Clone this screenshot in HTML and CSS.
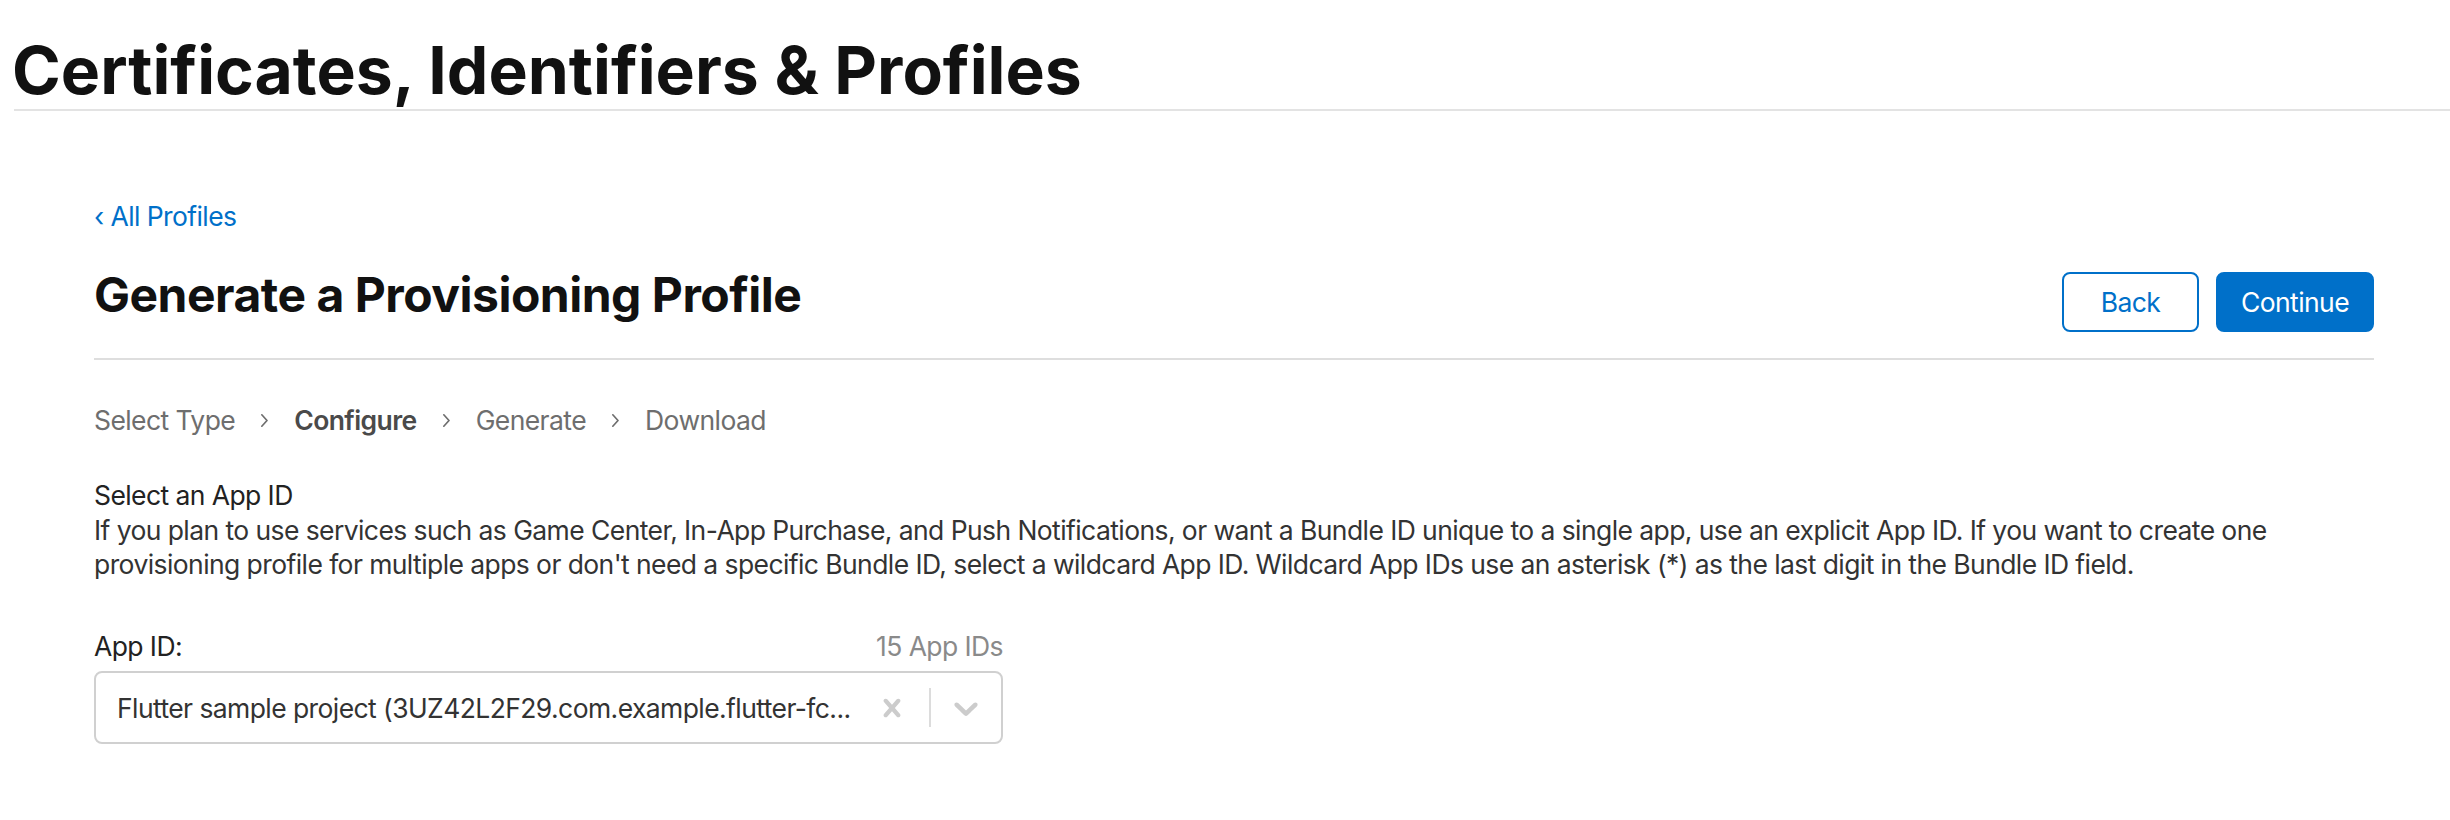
FILE: index.html
```html
<!DOCTYPE html>
<html lang="en">
<head>
<meta charset="utf-8">
<title>Certificates, Identifiers &amp; Profiles</title>
<link rel="stylesheet" href="styles.css">
</head>
<body>
<header class="topbar">
  <h1 class="site-title">Certificates, Identifiers &amp; Profiles</h1>
</header>
<main class="main">
  <a class="back-link" href="#">&lsaquo; All Profiles</a>
  <div class="title-row">
    <h2 class="page-title">Generate a Provisioning Profile</h2>
    <div class="actions">
      <button class="btn btn-outline">Back</button>
      <button class="btn btn-primary">Continue</button>
    </div>
  </div>
  <nav class="steps">
    <span class="step">Select Type</span>
    <svg class="chev" viewBox="0 0 9 15" width="9" height="15"><path d="M1.8 1.8 L7 7.5 L1.8 13.2" fill="none" stroke="#6e6e6e" stroke-width="1.7" stroke-linecap="round" stroke-linejoin="round"/></svg>
    <span class="step step-active">Configure</span>
    <svg class="chev" viewBox="0 0 9 15" width="9" height="15"><path d="M1.8 1.8 L7 7.5 L1.8 13.2" fill="none" stroke="#6e6e6e" stroke-width="1.7" stroke-linecap="round" stroke-linejoin="round"/></svg>
    <span class="step">Generate</span>
    <svg class="chev" viewBox="0 0 9 15" width="9" height="15"><path d="M1.8 1.8 L7 7.5 L1.8 13.2" fill="none" stroke="#6e6e6e" stroke-width="1.7" stroke-linecap="round" stroke-linejoin="round"/></svg>
    <span class="step">Download</span>
  </nav>
  <section class="intro">
    <div class="intro-title">Select an App ID</div>
    <p class="intro-text">If you plan to use services such as Game Center, In-App Purchase, and Push Notifications, or want a Bundle ID unique to a single app, use an explicit App ID. If you want to create one provisioning profile for multiple apps or don't need a specific Bundle ID, select a wildcard App ID. Wildcard App IDs use an asterisk (*) as the last digit in the Bundle ID field.</p>
  </section>
  <div class="field">
    <div class="field-head">
      <label class="field-label">App ID:</label>
      <span class="field-count">15 App IDs</span>
    </div>
    <div class="select">
      <div class="select-value">Flutter sample project (3UZ42L2F29.com.example.flutter-fc...</div>
      <div class="select-indicators">
        <div class="ind ind-clear">
          <svg viewBox="0 0 20 20" width="36" height="36"><path fill="#cccccc" d="M14.348 14.849c-0.469 0.469-1.229 0.469-1.697 0l-2.651-3.030-2.651 3.029c-0.469 0.469-1.229 0.469-1.697 0-0.469-0.469-0.469-1.229 0-1.697l2.758-3.15-2.759-3.152c-0.469-0.469-0.469-1.228 0-1.697s1.228-0.469 1.697 0l2.652 3.031 2.651-3.031c0.469-0.469 1.228-0.469 1.697 0s0.469 1.229 0 1.697l-2.758 3.152 2.758 3.15c0.469 0.469 0.469 1.229 0 1.698z"/></svg>
        </div>
        <span class="ind-sep"></span>
        <div class="ind ind-drop">
          <svg viewBox="0 0 20 20" width="40" height="40"><path fill="#cccccc" d="M4.516 7.548c0.436-0.446 1.043-0.481 1.576 0l3.908 3.747 3.908-3.747c0.533-0.481 1.141-0.446 1.574 0 0.436 0.445 0.408 1.197 0 1.615-0.406 0.418-4.695 4.502-4.695 4.502-0.217 0.223-0.502 0.335-0.787 0.335s-0.57-0.112-0.789-0.335c0 0-4.287-4.084-4.695-4.502s-0.436-1.17 0-1.615z"/></svg>
        </div>
      </div>
    </div>
  </div>
</main>
</body>
</html>
```
FILE: styles.css
```css
html, body {
  margin: 0;
  padding: 0;
  background: #ffffff;
}
body {
  font-family: Inter, "Noto Sans", "Liberation Sans", sans-serif;
  color: #333333;
  font-size: 26.5px;
  letter-spacing: -0.022em;
}
.topbar {
  margin-left: 14px;
  border-bottom: 2px solid #e3e3e3;
}
.site-title {
  margin: 0 0 0 -2px;
  padding-top: 31px;
  font-size: 66px;
  line-height: 78px;
  font-weight: 700;
  color: #111111;
  letter-spacing: 0;
}
.main {
  padding: 0 76px 0 94px;
}
.back-link {
  display: block;
  margin-top: 89px;
  line-height: 32px;
  color: #0070c9;
  text-decoration: none;
}
.title-row {
  display: flex;
  justify-content: space-between;
  align-items: flex-start;
  margin-top: 33px;
  padding-bottom: 26px;
  border-bottom: 2px solid #dedede;
}
.page-title {
  margin: 0;
  font-size: 48px;
  line-height: 60px;
  font-weight: 700;
  color: #111111;
  letter-spacing: -0.5px;
}
.actions {
  display: flex;
  gap: 17px;
  margin-top: 7px;
}
.btn {
  height: 60px;
  border-radius: 8px;
  font-family: inherit;
  font-size: 26.5px;
  letter-spacing: -0.022em;
  padding: 0;
  cursor: pointer;
}
.btn-outline {
  width: 137px;
  background: #ffffff;
  color: #0070c9;
  border: 2px solid #0070c9;
}
.btn-primary {
  width: 158px;
  background: #0070c9;
  color: #ffffff;
  border: 2px solid #0070c9;
}
.steps {
  display: flex;
  align-items: center;
  gap: 25px;
  margin-top: 40px;
  line-height: 40px;
  color: #6e6e6e;
}
.step-active {
  font-weight: 600;
  color: #4a4a4a;
}
.chev {
  display: block;
}
.intro {
  margin-top: 38px;
  line-height: 34.5px;
  color: #333333;
}
.intro-title {
  color: #222222;
}
.intro-text {
  margin: 0;
}
.field {
  width: 909px;
  margin-top: 47px;
}
.field-head {
  display: flex;
  justify-content: space-between;
  align-items: baseline;
  line-height: 34.5px;
}
.field-label {
  color: #222222;
}
.field-count {
  color: #8a8a8a;
}
.select {
  display: flex;
  align-items: center;
  margin-top: 8px;
  height: 73px;
  box-sizing: border-box;
  border: 2px solid #d0d0d0;
  border-radius: 8px;
}
.select-value {
  flex: 1;
  min-width: 0;
  padding-left: 21px;
  white-space: nowrap;
  overflow: hidden;
  color: #333333;
}
.select-indicators {
  display: flex;
  align-items: center;
  height: 100%;
}
.ind {
  display: flex;
  align-items: center;
}
.ind svg {
  display: block;
}
.ind-clear {
  padding: 0 19px 0 12px;
}
.ind-sep {
  width: 2px;
  height: 39px;
  background: #dcdcdc;
}
.ind-drop {
  padding: 0 15px 0 15px;
}
```
